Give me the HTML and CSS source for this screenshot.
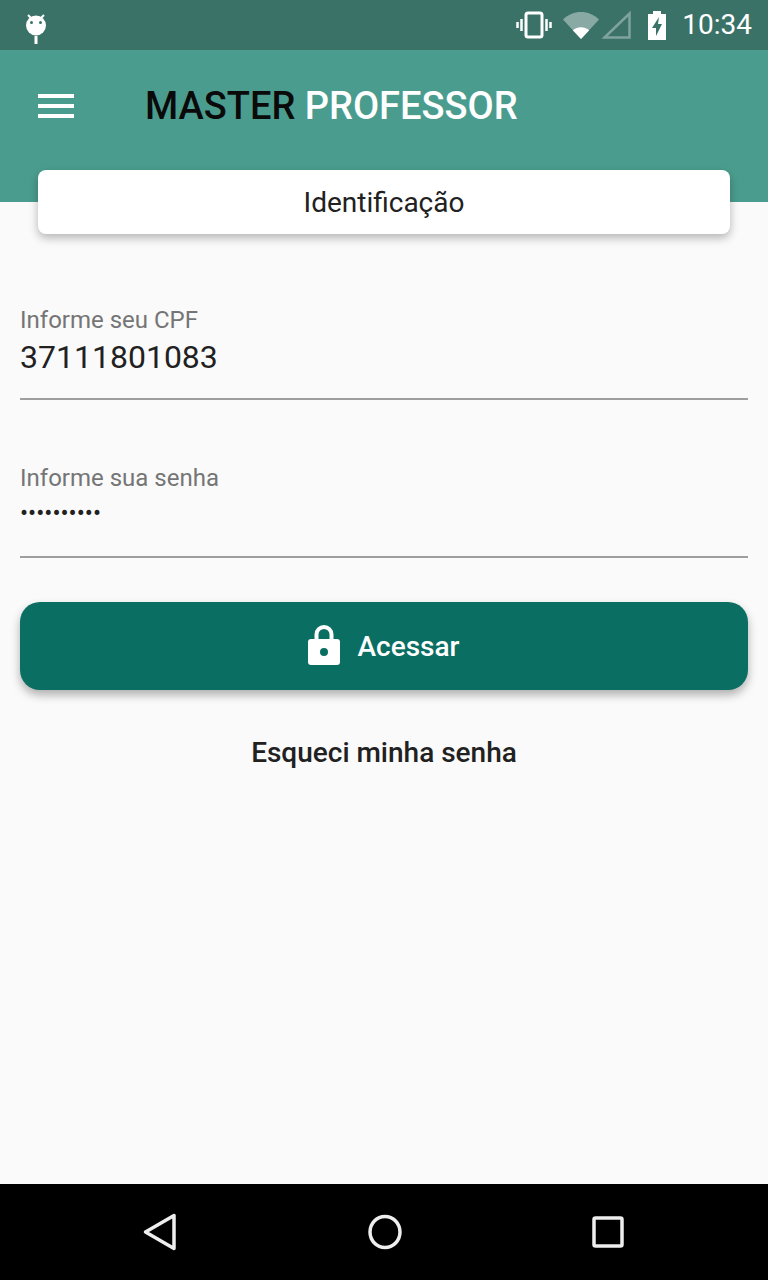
FILE: index.html
```html
<!DOCTYPE html>
<html lang="pt">
<head>
<meta charset="utf-8">
<title>Master Professor</title>
<link rel="stylesheet" href="styles.css">
</head>
<body>
<div class="screen">
  <div class="status">
    <svg class="android" width="24" height="32" viewBox="0 0 24 32">
      <path d="M4 2l4 4M20 2l-4 4" stroke="#fff" stroke-width="2" fill="none"/>
      <circle cx="12" cy="12.500" r="10" fill="#fff"/>
      <circle cx="7.500" cy="9.500" r="1.500" fill="#3b7268"/>
      <circle cx="16.500" cy="9.500" r="1.500" fill="#3b7268"/>
      <rect x="10.500" y="23" width="3" height="8" fill="#fff"/>
    </svg>
    <div class="status-right">
      <svg width="36" height="28" viewBox="0 0 36 28">
        <rect x="10" y="2" width="16" height="24" rx="2" fill="none" stroke="#fff" stroke-width="3"/>
        <path d="M5.500 8v12M1.500 11v6M30.500 8v12M34.500 11v6" stroke="#fff" stroke-width="2.500"/>
      </svg>
      <svg class="wifi" width="36" height="28" viewBox="0 0 36 28">
        <path d="M0 8.500C10-1.500 26-1.500 36 8.500L18 28Z" fill="#fff" opacity=".4"/>
        <path d="M9 18.300C14-.5 22-.5 27 18.300L18 28Z" fill="none"/>
        <path d="M9.800 19.200c4.800-4 11.600-4 16.400 0L18 28Z" fill="#fff"/>
      </svg>
      <svg class="signal" width="30" height="28" viewBox="0 0 30 28">
        <path d="M2.500 26.500L27.500 2.500V26.500Z" fill="none" stroke="#fff" stroke-opacity=".35" stroke-width="2.500"/>
      </svg>
      <svg class="battery" width="20" height="30" viewBox="0 0 20 30">
        <path d="M6 1h8v3h5v26H1V4h5Z" fill="#fff"/>
        <path d="M12 7L5 18h4v8l6-12h-4Z" fill="#3b7268"/>
      </svg>
      <span class="time">10:34</span>
    </div>
  </div>
  <header class="appbar">
    <div class="appbar-row">
      <div class="hamburger"><i></i><i></i><i></i></div>
      <h1 class="brand"><span class="brand-dark">MASTER</span> PROFESSOR</h1>
    </div>
  </header>
  <div class="card">Identificação</div>
  <main class="content">
    <div class="field field-first">
      <label class="label">Informe seu CPF</label>
      <div class="value">37111801083</div>
    </div>
    <div class="field">
      <label class="label">Informe sua senha</label>
      <div class="value value-pass">••••••••••</div>
    </div>
    <button class="btn">
      <svg width="34" height="42" viewBox="0 0 34 42">
        <path d="M9.500 18V11.500a7.500 7.500 0 0 1 15 0V18" fill="none" stroke="#fff" stroke-width="4"/>
        <path fill-rule="evenodd" fill="#fff" d="M4 16h26a3 3 0 0 1 3 3v20a3 3 0 0 1-3 3H4a3 3 0 0 1-3-3V19a3 3 0 0 1 3-3ZM17 25a4 4 0 1 0 0 8a4 4 0 0 0 0-8Z"/>
      </svg>
      <span>Acessar</span>
    </button>
    <div class="forgot">Esqueci minha senha</div>
  </main>
  <nav class="navbar">
    <svg width="34" height="38" viewBox="0 0 34 38"><path d="M31 2.500V35.500L2.500 19Z" fill="none" stroke="#eee" stroke-width="3.500" stroke-linejoin="round"/></svg>
    <svg width="34" height="36" viewBox="0 0 34 36"><ellipse cx="17" cy="18" rx="15" ry="15.500" fill="none" stroke="#eee" stroke-width="3.500"/></svg>
    <svg width="32" height="32" viewBox="0 0 32 32"><rect x="2" y="2" width="28" height="28" rx="1.500" fill="none" stroke="#eee" stroke-width="3.500"/></svg>
  </nav>
</div>
</body>
</html>
```
FILE: styles.css
```css
* { box-sizing: border-box; }
html, body { margin: 0; padding: 0; }
body { font-family: Roboto, "Noto Sans", sans-serif; background: #fafafa; }
.screen { width: 768px; height: 1280px; display: flex; flex-direction: column; overflow: hidden; position: relative; }

.status { height: 50px; flex: none; background: #3b7268; display: flex; align-items: center; justify-content: space-between; padding: 0 16px 0 24px; }
.android { margin-top: 8px; }
.status-right { display: flex; align-items: center; }
.wifi { margin-left: 11px; }
.signal { margin-left: 3px; }
.battery { margin-left: 15px; }
.time { color: #fff; font-size: 28px; margin-left: 15px; line-height: 50px; }

.appbar { height: 152px; flex: none; background: #4a9d8e; }
.appbar-row { display: flex; align-items: center; height: 112px; padding-left: 38px; }
.hamburger { width: 36px; height: 24px; display: flex; flex-direction: column; justify-content: space-between; }
.hamburger i { display: block; height: 4px; background: #fff; }
.brand { margin: 0 0 0 71px; font-size: 38px; font-weight: 500; color: #fff; letter-spacing: 0; }
.brand-dark { color: #0a0a0a; }

.card { position: absolute; left: 38px; top: 170px; width: 692px; height: 64px; background: #fff; border-radius: 8px; display: flex; align-items: center; justify-content: center; font-size: 28px; color: #212121; box-shadow: 0 4px 10px rgba(0,0,0,.28); }

.content { flex: 1; padding: 0 20px; display: flex; flex-direction: column; }
.field { height: 90px; margin-top: 68px; border-bottom: 2px solid #9e9e9e; display: flex; flex-direction: column; }
.field-first { margin-top: 108px; height: 90px; }
.label { font-size: 24px; color: #757575; line-height: 28px; margin-top: -4px; }
.value { font-size: 32px; color: #212121; line-height: 44px; margin-top: 1px; }
.value-pass { font-size: 24px; letter-spacing: 0; line-height: 38px; margin-top: 2px; }

.btn { height: 88px; margin-top: 44px; border: 0; border-radius: 20px; background: #0b6e62; color: #fff; font-family: inherit; font-size: 28px; font-weight: 500; display: flex; align-items: center; justify-content: center; gap: 17px; box-shadow: 0 5px 10px rgba(0,0,0,.3); padding: 0; }
.btn svg { margin-left: -2px; margin-top: -4px; }
.forgot { margin-top: 44px; text-align: center; font-size: 28px; font-weight: 500; color: #212121; line-height: 37px; }

.navbar { height: 96px; flex: none; background: #000; display: flex; align-items: center; justify-content: space-between; padding: 0 144px 0 143px; }
```
